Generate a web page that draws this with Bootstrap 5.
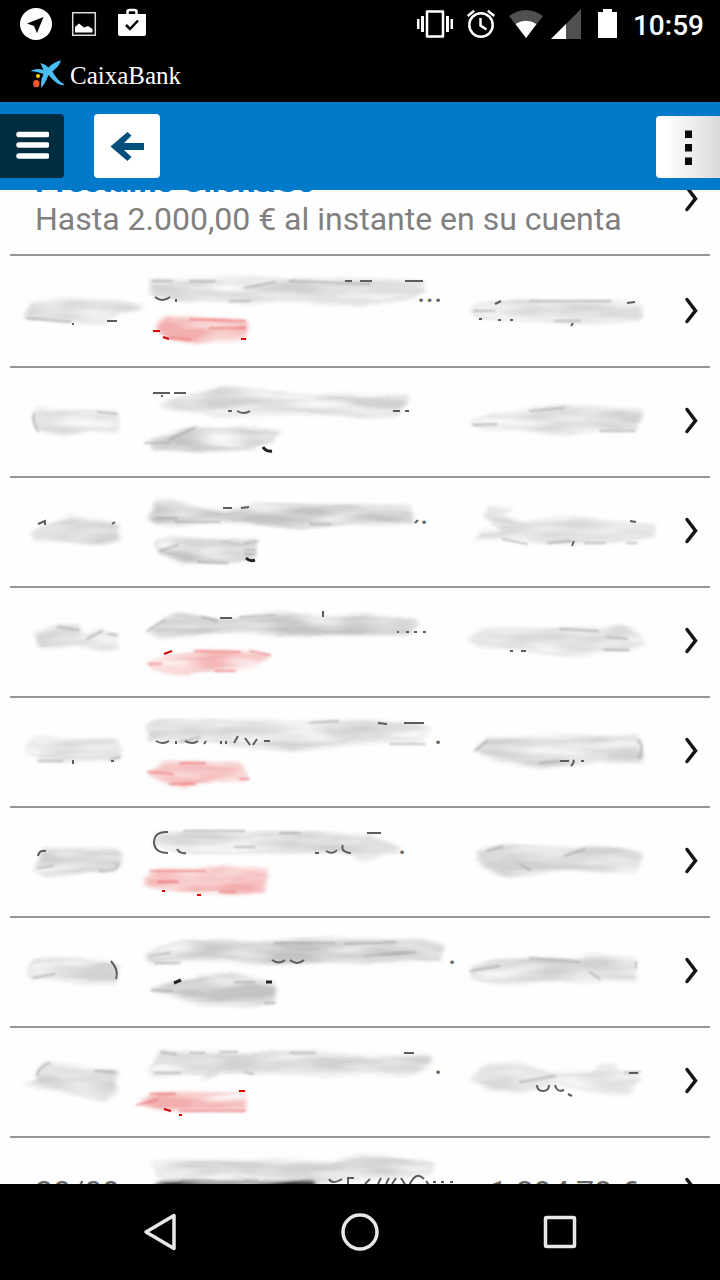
<!DOCTYPE html>
<html lang="es">
<head>
<meta charset="utf-8">
<meta name="viewport" content="width=device-width, initial-scale=1">
<title>CaixaBank</title>
<link href="https://cdn.jsdelivr.net/npm/bootstrap@5.3.0/dist/css/bootstrap.min.css" rel="stylesheet">
<style>
  body { font-family: Roboto, "Liberation Sans", sans-serif; background: #fefefe; }
  svg { display: block; flex: none; }
  .status-bar { height: 48px; padding: 0 16px 0 20px; }
  .clock { font-size: 28px; font-weight: 500; line-height: 44px; padding-top: 4px; }
  .brand-bar { height: 54px; padding: 0 30px 4px; gap: 4px; }
  .brand-name { font: 25px/36px "Liberation Serif", serif; padding-top: 6px; }
  .tool-bar { height: 88px; background: #007ac9; z-index: 2; }
  .tool-btn { width: 64px; height: 64px; padding: 0; border: 0; border-radius: 4px; display: flex; align-items: center; justify-content: center; }
  .menu-btn { background: #002d40; border-radius: 0 4px 4px 0; }
  .back-btn { width: 66px; margin-left: 30px; background: #fff; }
  .more-btn { height: 62px; margin-top: 2px; border-radius: 4px 0 0 4px; background: linear-gradient(90deg, #fff 15%, #dadada); }
  .movements { margin: -44px 10px 0; }
  .movement { display: grid; grid-template-columns: 120fr 330fr 200fr 50fr; align-items: center; height: 110px; border-bottom: 2px solid #969696; color: #666; font-size: 32px; line-height: 38px; text-decoration: none; }
  .movement.first-move { height: 112px; padding-top: 2px; }
  .movement svg { width: 100%; height: 108px; overflow: visible; }
  .promo { grid-template-columns: 650fr 50fr; color: #808080; }
  .promo-title { color: #007ac9; font-weight: 700; }
  .indent { padding-left: 25px; }
  .smear { fill: #d2d2d2; filter: url(#smear); }
  .smear.pale { fill: #dadada; }
  .smear.deep { fill: #c4c4c4; }
  .smear.debit { fill: #f3aeae; }
  .streak { fill: none; stroke: #999; stroke-width: 2; stroke-linecap: round; filter: url(#soft); opacity: .6; }
  .streak.debit { stroke: #ea6060; }
  .ink { fill: none; stroke: #5c5c5c; stroke-width: 2; }
  .ink.debit { stroke: #dc0000; }
  .movement text { fill: #666; font-size: 32px; }
  .nav-bar { height: 96px; padding: 0 8.3333%; z-index: 2; }
  .nav-bar button { padding: 0; border: 0; background: none; flex: 1 1 0; display: flex; justify-content: center; }
</style>
</head>
<body>
<svg width="0" height="0" class="position-absolute" aria-hidden="true">
  <defs>
    <filter id="smear" x="-15%" y="-50%" width="130%" height="200%" color-interpolation-filters="sRGB">
      <feTurbulence type="fractalNoise" baseFrequency="0.015 0.07" numOctaves="2" seed="4" result="noise"/>
      <feGaussianBlur in="SourceGraphic" stdDeviation="2" result="soft"/>
      <feDisplacementMap in="soft" in2="noise" scale="8" xChannelSelector="R" yChannelSelector="G" result="shape"/>
      <feColorMatrix in="noise" type="matrix" values="0 0 0 0 1  0 0 0 0 1  0 0 0 0 1  1.8 0 0 0 -0.6" result="light"/>
      <feComposite in="light" in2="shape" operator="in" result="gloss"/>
      <feMerge><feMergeNode in="shape"/><feMergeNode in="gloss"/></feMerge>
    </filter>
    <filter id="soft" x="-20" y="-20" width="140" height="40"><feGaussianBlur stdDeviation="1"/></filter>
    <symbol id="chevron" viewBox="660 368 50 108"><path d="M687 409.500 695.500 420.700 687 431.500" fill="none" stroke="#151515" stroke-width="3.500" stroke-linecap="round"/></symbol>
  </defs>
</svg>

<div class="d-flex flex-column vh-100 overflow-hidden">
  <header class="bg-black text-white">
    <div class="status-bar d-flex align-items-center justify-content-between">
      <div class="d-flex align-items-center" style="gap:18px">
        <svg width="32" height="32" viewBox="20 8 32 32"><circle cx="36" cy="24" r="16" fill="#fff"/><path d="M43.500 17 27 23.500l7 2.500 3 7z"/></svg>
        <svg width="28" height="32" viewBox="70 8 28 32"><path d="M72.700 12.700h22.600v22.600H72.700z" fill="none" stroke="#ddd" stroke-width="1.500"/><path d="M75 32.500V27l4-3.500 5 4 4-1.500 4.500 3v3.500z" fill="#fff"/></svg>
        <svg width="32" height="32" viewBox="116 8 32 32"><path d="M118 14h28v20q0 2-2 2h-24q-2 0-2-2z" fill="#fff"/><path d="M127.500 14v-2q0-2 2-2h5q2 0 2 2v2" fill="none" stroke="#fff" stroke-width="2.500"/><path d="m126 25 4 4 8-8.500" fill="none" stroke="#000" stroke-width="2.500"/></svg>
      </div>
      <div class="d-flex align-items-center gap-2">
        <svg width="36" height="32" viewBox="419 8 36 32" fill="#fff"><path d="M429 11.500h16v25h-16z" fill="none" stroke="#fff" stroke-width="2.500" stroke-linejoin="round"/><path d="M419 19h2.500v10H419zM423 16h3v16h-3zM448 16h3v16h-3zM452.500 19h2.500v10h-2.500z"/></svg>
        <svg width="40" height="32" viewBox="463 8 40 32" fill="none" stroke="#fff" stroke-width="2.500"><circle cx="483" cy="25" r="11.700"/><path d="M482.500 18v7.500l6 4M469.700 16l6.500-5.300M496.300 16l-6.500-5.300"/></svg>
        <svg width="34" height="32" viewBox="511 8 34 32"><path d="M511 16q17-12 34 0L528 38z" fill="#505050"/><path d="M517.500 24q10.500-6.500 21 0L528 38z" fill="#fff"/></svg>
        <svg width="30" height="32" viewBox="553 8 30 32"><path d="M583 9v30h-30z" fill="#505050"/><path d="M568 24v15h-15z" fill="#fff"/></svg>
        <svg width="36" height="32" viewBox="591 8 36 32"><path d="M605 9h9v3h5v26h-19V12h5z" fill="#fff"/></svg>
        <span class="clock">10:59</span>
      </div>
    </div>
    <div class="brand-bar d-flex align-items-center">
      <svg width="36" height="34" viewBox="30 58 36 34"><path d="M30.500 73q6-3.500 13-1-1.500-3-3-7 4 .5 8 4.500 6-6 12.500-7.200-1 5-8.500 11.200 4 8 12 13.300-2 1.500-7-1.300-5-3.500-9-8.500-2.500 7-7 13-1.500-7 2-14-6-2.500-13-3z" fill="#49bdf2"/><circle cx="38" cy="78" r="2" fill="#ffd500"/><ellipse cx="36.300" cy="85.700" rx="3.200" ry="3.600" fill="#f05a28"/></svg>
      <span class="brand-name">CaixaBank</span>
    </div>
  </header>

  <nav class="tool-bar d-flex align-items-center position-relative flex-shrink-0" aria-label="Principal">
    <button type="button" class="tool-btn menu-btn" aria-label="Menú"><svg width="34" height="30" viewBox="0 0 34 30"><path d="M4 3.500h28M4 14h28M4 25h28" stroke="#fff" stroke-width="5.500" stroke-linecap="round"/></svg></button>
    <button type="button" class="tool-btn back-btn" aria-label="Volver"><svg width="36" height="34" viewBox="109 130 36 34"><path d="m127.500 133 4 3.500-7.500 7.500H144v7h-20l7.500 7-4 4-17-14.500z" fill="#004f7c"/></svg></button>
    <button type="button" class="tool-btn more-btn ms-auto" aria-label="Más opciones"><svg width="8" height="36" viewBox="0 0 8 36"><path d="M1 1.500h7v7.500H1zM1 15h7v7.500H1zM1 28.500h7V36H1z" fill="#0a0a0a"/></svg></button>
  </nav>

  <main class="flex-grow-1 overflow-hidden" style="min-height:0">
    <div class="movements">
      <a href="#" class="movement promo"><span class="indent text-nowrap"><span class="promo-title d-block">Préstamo Click&amp;Go</span>Hasta 2.000,00 € al instante en su cuenta</span><svg><use href="#chevron"/></svg></a>

      <a href="#" class="movement first-move" aria-label="Movimiento">
        <svg viewBox="10 258 120 108"><path class="smear" d="M24 315 32 302 60 300 118 301 143 308 122 313 104 324 70 320 28 319z"/><path class="streak" d="M27 318 70 322"/><path class="ink" d="M107 321h10M72 324h2"/></svg>
        <svg viewBox="130 258 330 108"><path class="smear" d="M149 283 156 280 250 279 360 280 422 281 426 290 412 299 360 302 240 301 180 300 151 295z"/><path class="streak" d="M190 281H215M245 288l30-6M290 281l80 3M152 281h20M230 301h20"/><path class="ink" d="M155 297q7 6 15 0M176 299v3M345 281h7M360 281h12M405 281h18"/><path class="smear debit" d="M153 328 166 317 210 318 247 320 246 337 216 339 196 344 166 340z"/><path class="streak debit" d="M190 319l55 2M170 338l20 2M210 328h35"/><path class="ink debit" d="M153 331h7M163 337l6 2M241 339h5"/><text x="417" y="302">...</text></svg>
        <svg viewBox="460 258 200 108"><path class="smear" d="M471 311 480 304 520 300 600 302 642 304 641 319 590 322 520 320 482 319z"/><path class="streak" d="M474 311h20M530 301h80M555 321h25"/><path class="ink" d="M479 319h3M498 320h3M510 320h3M573 323l-2 3M627 303l8-1M495 304l6-3"/></svg>
        <svg><use href="#chevron"/></svg>
      </a>

      <a href="#" class="movement" aria-label="Movimiento">
        <svg viewBox="10 368 120 108"><path class="smear" d="M33 413 38 408 52 411 90 411 118 412 119 432 92 430 65 435 36 430z"/><path class="streak" d="M34 414q-2 8 4 17M98 412l19 2"/></svg>
        <svg viewBox="130 368 330 108"><path class="smear" d="M158 406 190 396 220 389 260 390 300 394 350 394 410 395 400 414 360 418 300 412 220 414 170 409z"/><path class="ink" d="M153 393h17M162 395v2M174 393h12M228 411h4M237 411q7 4 13 0M393 411h7M405 411h4"/><path class="smear deep" d="M150 440 170 435 190 428 240 427 281 432 273 441 248 449 195 451 153 449z"/><path class="streak" d="M170 439 195 428M145 443h25"/><path class="ink" style="stroke:#222;stroke-width:3" d="M263 447q3 5 9 4"/></svg>
        <svg viewBox="460 368 200 108"><path class="smear" d="M472 423 495 414 530 411 565 407 600 410 641 411 636 430 600 429 563 435 520 429 480 427z"/><path class="streak" d="M473 425l24-1M530 411l34-3M600 431h35"/></svg>
        <svg><use href="#chevron"/></svg>
      </a>

      <a href="#" class="movement" aria-label="Movimiento">
        <svg viewBox="10 478 120 108"><path class="smear" d="M32 532 53 521 69 516 95 519 117 523 119 539 100 544 60 541 34 541z"/><path class="ink" d="M38 524l7-3v4M112 524l3-2"/></svg>
        <svg viewBox="130 478 330 108"><path class="smear deep" d="M147 518 156 502 178 504 225 511 260 504 310 506 411 506 414 523 350 523 300 528 240 522 156 524z"/><path class="streak" d="M157 518h20M175 522h45M310 524h20"/><path class="ink" d="M223 508h9M241 508l8-1M415 523l3-3"/><path class="smear deep" d="M158 541 170 538 215 540 257 542 254 556 230 562 185 565 158 554z"/><path class="streak" d="M160 551l18-6M198 562l30 1M245 543l12-2M245 550h11M245 554h11"/><path class="ink" style="stroke:#222;stroke-width:3" d="M246 558q4 4 9 2"/><text x="420" y="524">.</text></svg>
        <svg viewBox="460 478 200 108"><path class="smear pale" d="M473 540 480 532 500 533 483 516 489 506 515 507 500 515 520 522 575 518 610 522 655 525 654 537 610 542 545 543 515 539z"/><path class="streak" d="M503 539l24 5M548 543l23-2M585 543h20M627 543h10"/><path class="ink" d="M574 541l-2 5M630 521l6 1"/></svg>
        <svg><use href="#chevron"/></svg>
      </a>

      <a href="#" class="movement" aria-label="Movimiento">
        <svg viewBox="10 588 120 108"><path class="smear" d="M34 633 58 625 78 625 84 635 103 630 118 635 117 649 102 652 80 647 38 648z"/><path class="streak" d="M58 627 79 630M87 639l15-8M109 634l8 1"/></svg>
        <svg viewBox="130 588 330 108"><path class="smear deep" d="M147 632 165 620 178 614 220 620 275 615 335 618 365 613 419 622 410 633 340 634 310 637 240 632 162 637z"/><path class="streak" d="M147 631l18-11M202 617l15 4M240 617l35-2"/><path class="ink" d="M220 618h12M323 611v6M397 632h2M406 632h3M414 632h3M423 632h3"/><path class="smear debit" d="M149 663 170 655 200 650 240 651 270 655 259 665 230 668 184 674 155 669z"/><path class="streak debit" d="M149 664h12M195 651l45 1M250 651l20 4M215 671h20"/><path class="ink debit" d="M164 654l8-3"/></svg>
        <svg viewBox="460 588 200 108"><path class="smear pale" d="M467 640 485 630 520 629 570 628 602 629 620 624 640 634 646 643 625 651 570 655 520 648 480 646z"/><path class="streak" d="M560 629l38 2M607 637l20 2M605 650h24"/><path class="ink" d="M510 651h3M521 651h5"/></svg>
        <svg><use href="#chevron"/></svg>
      </a>

      <a href="#" class="movement" aria-label="Movimiento">
        <svg viewBox="10 698 120 108"><path class="smear" d="M29 744 38 737 80 740 115 740 123 750 118 759 85 760 42 761 31 754z"/><path class="streak" d="M38 761h25M110 760l10-3"/><path class="ink" d="M73 760v4M111 761h3"/></svg>
        <svg viewBox="130 698 330 108"><path class="smear" d="M147 725 156 721 230 722 290 723 340 721 420 724 434 730 420 739 350 743 290 750 220 741 148 740z"/><path class="streak" d="M180 742l20-5M310 723l28-2M390 744h35"/><path class="ink" d="M156 741q7 4 13 0M176 741v3M185 741q8 4 13 0M206 741l-2 3M221 741v3M226 741v3M234 743l4-7M245 738l5 7M253 745l4-6M264 741h6M378 723l9 1M404 723h20"/><path class="smear debit" d="M148 773 163 762 200 761 240 764 249 778 218 779 185 786 163 781z"/><path class="streak debit" d="M180 763h25M148 772l25 2M240 779h9M170 784h25"/><text x="434" y="744">.</text></svg>
        <svg viewBox="460 698 200 108"><path class="smear" d="M475 751 486 738 520 737 565 735 612 738 635 735 643 742 642 761 600 759 541 768 504 762 480 756z"/><path class="streak" d="M475 751l12-10M540 763l20-2M638 740q7 8 1 18"/><path class="ink" d="M560 761h9M573 760q2 2-2 6M581 761h3"/></svg>
        <svg><use href="#chevron"/></svg>
      </a>

      <a href="#" class="movement" aria-label="Movimiento">
        <svg viewBox="10 808 120 108"><path class="smear" d="M38 855 45 850 85 850 119 850 122 858 117 871 94 872 48 878 36 870z"/><path class="streak" d="M38 868l15-2M99 871q17 1 20-7"/><path class="ink" d="M38 856q1-6 8-5"/></svg>
        <svg viewBox="130 808 330 108"><path class="smear" d="M153 842 158 833 190 832 270 833 338 834 370 835 403 850 385 853 366 861 345 852 240 853 180 851z"/><path class="streak" d="M184 831h60M280 833h20M235 847h20"/><path class="ink" d="M168 832q-14-1-14 11 1 10 14 10M177 849q3 5 9 4M315 853h4M326 851q7 4 11-1M343 845q-3 7 8 8M367 833h14"/><path class="smear debit" d="M142 882 153 872 195 872 224 867 268 871 264 890 235 893 199 892 154 887z"/><path class="streak debit" d="M150 871h55M158 882h20M220 892h15"/><path class="ink debit" d="M162 891h3M197 895h4"/><text x="398" y="854">.</text></svg>
        <svg viewBox="460 808 200 108"><path class="smear" d="M475 853 500 845 550 848 575 850 590 846 620 849 642 853 637 870 605 873 560 871 505 876 480 865z"/><path class="streak" d="M487 851l15-4M520 864l10 6M565 856l20-7"/></svg>
        <svg><use href="#chevron"/></svg>
      </a>

      <a href="#" class="movement" aria-label="Movimiento">
        <svg viewBox="10 918 120 108"><path class="smear" d="M28 978 33 960 60 958 105 961 118 966 116 983 85 983 36 978z"/><path class="streak" d="M33 978l22-4"/><path class="ink" d="M111 961q8 9 5 18"/></svg>
        <svg viewBox="130 918 330 108"><path class="smear deep" d="M147 956 160 948 185 940 280 942 345 940 420 941 444 948 440 961 360 963 250 963 185 961 148 963z"/><path class="streak" d="M150 956l20-3M155 963h25M275 943h60M345 944l50-2M365 956l50-4"/><path class="ink" d="M272 960q7 5 13 0M290 960q7 6 14 0"/><path class="smear deep" d="M149 989 173 982 200 976 230 974 259 980 275 983 275 1001 255 1005 200 1003 163 993z"/><path class="streak" d="M152 990l20 1M235 982h20M265 1003h10"/><path class="ink" style="stroke:#222;stroke-width:3" d="M174 983l7-3M266 982h6"/><text x="448" y="964">.</text></svg>
        <svg viewBox="460 918 200 108"><path class="smear" d="M470 969 495 961 530 958 575 961 590 955 636 959 636 982 600 981 560 980 500 984 473 978z"/><path class="streak" d="M471 971l28-5M530 958l50 4M590 972l10 7M636 962v6"/></svg>
        <svg><use href="#chevron"/></svg>
      </a>

      <a href="#" class="movement" aria-label="Movimiento">
        <svg viewBox="10 1028 120 108"><path class="smear" d="M20 1085 35 1083 38 1068 48 1063 75 1067 118 1071 114 1083 118 1092 104 1099 75 1092z"/><path class="streak" d="M37 1075q3-10 13-12M95 1071l20 1"/></svg>
        <svg viewBox="130 1028 330 108"><path class="smear" d="M151 1072 160 1052 240 1053 330 1055 430 1056 430 1064 410 1074 320 1074 220 1072 200 1082 208 1074 150 1073z"/><path class="streak" d="M161 1052l15 2M190 1053h15M220 1052h17M290 1053h25M155 1073h25M245 1072l8 2"/><path class="ink" d="M404 1053h10"/><path class="smear debit" d="M138 1103 160 1092 200 1093 247 1094 245 1110 180 1109 158 1108z"/><path class="streak debit" d="M137 1105l20-5M150 1094h25M180 1111h65"/><path class="ink debit" d="M239 1091h6M164 1109l7 2M179 1115h3"/><text x="434" y="1074">.</text></svg>
        <svg viewBox="460 1028 200 108"><path class="smear pale" d="M470 1080 485 1066 520 1064 550 1072 595 1071 600 1064 614 1065 620 1073 642 1075 630 1094 590 1091 560 1084 520 1092 485 1087z"/><path class="streak" d="M520 1082l35-6M625 1073l15-1"/><path class="ink" d="M537 1085q0 6 6 6t6-6M555 1085q2 8 9 5M568 1094l4 2M629 1073h9"/></svg>
        <svg><use href="#chevron"/></svg>
      </a>

      <a href="#" class="movement">
        <span class="indent">20/09</span>
        <svg viewBox="130 1138 330 108"><path class="smear" d="M155 1162 230 1161 270 1160 330 1162 360 1156 434 1162 432 1173 350 1179 320 1184 220 1182 158 1176z"/><path class="smear" style="fill:#222" d="M154 1186l8-4 60-1 90 1 5 8H154z"/><path class="ink" d="M329 1179q3 6 13 0M348 1184v-6h6M365 1184l5-5M378 1184l3-6M386 1184l3-6M392 1184l4-6M401 1178l5 8M409 1186q7-16 15-7M426 1181l3 4M433 1182h3M441 1182h3M450 1182h3"/></svg>
        <span class="text-end text-nowrap" style="padding-right:22px">+1.294,78 €</span>
        <svg><use href="#chevron"/></svg>
      </a>
    </div>
  </main>

  <footer class="nav-bar bg-black d-flex align-items-center position-relative flex-shrink-0">
    <button type="button" aria-label="Atrás"><svg width="36" height="40" viewBox="0 0 36 40"><path d="M32 3.500v33L4 20z" fill="none" stroke="#e8e8e8" stroke-width="3.500" stroke-linejoin="round"/></svg></button>
    <button type="button" aria-label="Inicio"><svg width="40" height="40" viewBox="0 0 40 40"><circle cx="20" cy="20" r="17" fill="none" stroke="#e8e8e8" stroke-width="3.500"/></svg></button>
    <button type="button" aria-label="Recientes"><svg width="40" height="40" viewBox="0 0 40 40"><rect x="5.500" y="5.500" width="29" height="29" rx="1" fill="none" stroke="#e8e8e8" stroke-width="3.500"/></svg></button>
  </footer>
</div>
<script src="https://cdn.jsdelivr.net/npm/bootstrap@5.3.0/dist/js/bootstrap.bundle.min.js"></script>
</body>
</html>
